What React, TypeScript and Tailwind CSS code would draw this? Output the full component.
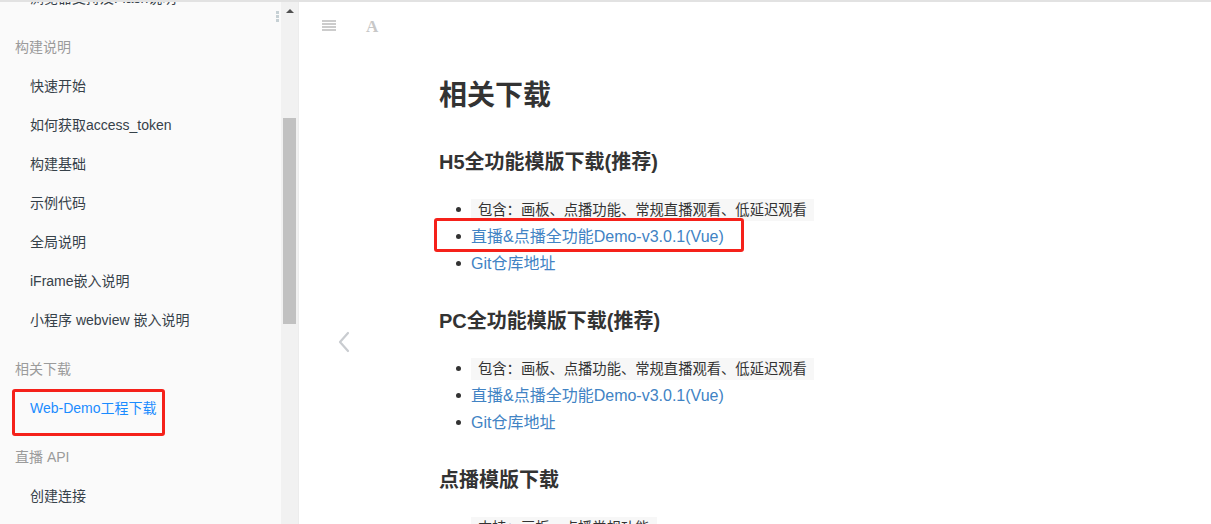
import React from 'react';

const sans = { fontFamily: '"Liberation Sans", "Noto Sans CJK SC", sans-serif' };

type NavItem = { text: string; header?: boolean; active?: boolean };

const nav: NavItem[] = [
  { text: '浏览器支持及Flash说明' },
  { text: '构建说明', header: true },
  { text: '快速开始' },
  { text: '如何获取access_token' },
  { text: '构建基础' },
  { text: '示例代码' },
  { text: '全局说明' },
  { text: 'iFrame嵌入说明' },
  { text: '小程序 webview 嵌入说明' },
  { text: '相关下载', header: true },
  { text: 'Web-Demo工程下载', active: true },
  { text: '直播 API', header: true },
  { text: '创建连接' },
  { text: '发送消息' },
];

const Sidebar = () => (
  <div className="relative w-[281px] shrink-0 overflow-hidden bg-[#fafafa]">
    <ul className="mt-[-23px] text-[14px]">
      {nav.map((item, i) =>
        item.header ? (
          <li key={i} className="flex h-[49px] items-end">
            <span className="flex h-[39px] items-center pl-[15px] text-[#9b9b9b]">{item.text}</span>
          </li>
        ) : (
          <li key={i} className="relative flex h-[39px] items-center pl-[30px]">
            <span className={item.active ? 'text-[#1a8cff]' : 'text-[#364149]'}>{item.text}</span>
            {item.active && (
              <div className="absolute left-[12px] top-[0px] h-[47px] w-[153px] rounded-[3px] border-[3px] border-[#f5211a]" />
            )}
          </li>
        )
      )}
    </ul>
    {/* drag handle */}
    <div className="absolute right-[2px] top-[9px] flex flex-col gap-[1px]">
      <span className="h-[3px] w-[3px] bg-[#c6d0d4]" />
      <span className="h-[3px] w-[3px] bg-[#c6d0d4]" />
      <span className="h-[3px] w-[3px] bg-[#c6d0d4]" />
    </div>
  </div>
);

const Scrollbar = () => (
  <div className="relative w-[17px] shrink-0 bg-[#f1f1f1]">
    <div className="flex h-[17px] items-center justify-center">
      <span className="h-0 w-0 border-x-[4px] border-b-[4px] border-x-transparent border-b-[#505050]" />
    </div>
    <div className="absolute left-[2px] top-[116px] h-[206px] w-[13px] bg-[#c1c1c1]" />
  </div>
);

const Bullet = ({ children }: { children: React.ReactNode }) => (
  <li className="flex h-[27px] items-center">
    <span className="ml-[17px] mr-[10px] h-[5px] w-[5px] rounded-full bg-[#333]" />
    {children}
  </li>
);

const Code = ({ children }: { children: React.ReactNode }) => (
  <span className="bg-[#f7f7f7] px-[7px] py-[3px] text-[14.3px] leading-[16px] text-[#333]">{children}</span>
);

const Link = ({ children }: { children: React.ReactNode }) => (
  <span className="text-[16px] text-[#4183c4]">{children}</span>
);

const Section = ({ title, boxed }: { title: string; boxed?: boolean }) => (
  <>
    <h2 className="h-[30px] text-[20px] font-bold leading-[30px] text-[#333]">{title}</h2>
    <ul className="relative mt-[19px]">
      <Bullet>
        <Code>包含：画板、点播功能、常规直播观看、低延迟观看</Code>
      </Bullet>
      <Bullet>
        <Link>直播&amp;点播全功能Demo-v3.0.1(Vue)</Link>
      </Bullet>
      <Bullet>
        <Link>Git仓库地址</Link>
      </Bullet>
      {boxed && (
        <div className="absolute left-[-5px] top-[22px] h-[34px] w-[310px] rounded-[3px] border-[3px] border-[#f5211a]" />
      )}
    </ul>
  </>
);

export default function App() {
  return (
    <div className="flex h-[524px] w-[1211px] overflow-hidden border-t-2 border-[#e2e2e2] bg-white" style={sans}>
      <Sidebar />
      <Scrollbar />
      <div className="w-[1px] shrink-0 bg-[#ececec]" />
      <main className="relative flex-1 bg-white">
        {/* toolbar */}
        <div className="flex h-[50px] items-center">
          <div className="ml-[23px] mt-[-3px] flex w-[14px] flex-col gap-[1px]">
            <span className="h-[2px] bg-[#cccccc]" />
            <span className="h-[2px] bg-[#cccccc]" />
            <span className="h-[2px] bg-[#cccccc]" />
            <span className="h-[2px] bg-[#cccccc]" />
          </div>
          <span
            className="ml-[30px] mt-[-1px] text-[17px] font-bold text-[#c8c8c8]"
            style={{ fontFamily: '"Liberation Serif", serif' }}
          >
            A
          </span>
        </div>

        {/* prev arrow */}
        <svg className="absolute left-[37px] top-[328px]" width="16" height="24" viewBox="0 0 16 24" fill="none">
          <path d="M12 3 L4 12 L12 21" stroke="#c9ccd0" strokeWidth="2.2" strokeLinecap="round" strokeLinejoin="round" />
        </svg>

        <div className="pl-[140px] pt-[24px]">
          <h1 className="h-[40px] text-[28px] font-bold leading-[40px] text-[#333]">相关下载</h1>
          <div className="mt-[31px]">
            <Section title="H5全功能模版下载(推荐)" boxed />
          </div>
          <div className="mt-[29px]">
            <Section title="PC全功能模版下载(推荐)" />
          </div>
          <h2 className="mt-[29px] h-[30px] text-[20px] font-bold leading-[30px] text-[#333]">点播模版下载</h2>
          <ul className="mt-[19px]">
            <Bullet>
              <Code>支持：画板、点播常规功能</Code>
            </Bullet>
          </ul>
        </div>
      </main>
    </div>
  );
}
